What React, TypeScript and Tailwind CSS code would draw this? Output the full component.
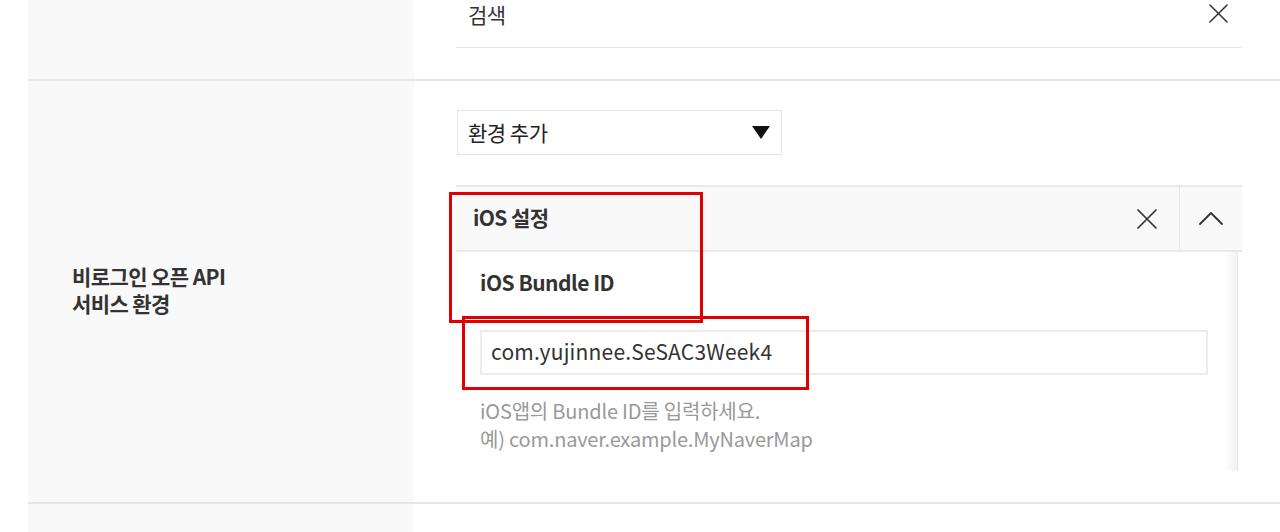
import React from "react";

const font = { fontFamily: '"Noto Sans CJK KR", "Noto Sans", sans-serif' };

function XIcon({ size = 20, stroke = 1.6 }: { size?: number; stroke?: number }) {
  return (
    <svg width={size} height={size} viewBox="0 0 20 20" fill="none" stroke="#333" strokeWidth={stroke} strokeLinecap="round">
      <path d="M1 1 L19 19 M19 1 L1 19" />
    </svg>
  );
}

export default function App() {
  return (
    <div className="relative w-[1280px] h-[532px] overflow-hidden bg-white text-[#333]" style={font}>
      <div className="ml-[28px] flex flex-col">
        {/* Row 1 */}
        <div className="flex h-[79px]">
          <div className="w-[386px] bg-[#f9f9f9]" />
          <div className="flex-1 pl-[42px] pr-[38px]">
            <div className="flex h-[48px] items-start justify-between border-b border-[#e6e6e6] pl-[12px] pr-[14px]">
              <span className="text-[21px] leading-[28px] tracking-[-0.5px]">검색</span>
              <div className="mt-[4px]"><XIcon size={19} /></div>
            </div>
          </div>
        </div>
        <div className="h-[2px] bg-[#e6e6e6]" />
        {/* Row 2 */}
        <div className="flex h-[421px]">
          <div className="w-[386px] bg-[#f9f9f9] flex items-center pl-[44px]">
            <div className="text-[21px] font-bold leading-[27px] tracking-[-0.6px] text-[#333] -mt-[3px]">
              비로그인 오픈 API
              <br />
              서비스 환경
            </div>
          </div>
          <div className="flex-1 pl-[42px] pr-[38px] pt-[29px]">
            <div className="ml-[1px] flex h-[45px] w-[325px] items-center justify-between border border-[#e3e3e3] pl-[10px] pr-[11px]">
              <span className="text-[21px] tracking-[-0.5px] text-[#222]">환경 추가</span>
              <svg width="18" height="13" viewBox="0 0 18 13"><path d="M0 0 H18 L9 13 Z" fill="#111" /></svg>
            </div>
            <div className="mt-[30px]">
              <div className="flex h-[67px] border-t-2 border-b-2 border-[#e8e8e8] bg-[#f9f9f9]">
                <div className="flex flex-1 items-center pl-[17px]">
                  <span className="text-[21px] font-bold tracking-[-0.6px] text-[#333] -mt-[2px]">iOS 설정</span>
                </div>
                <div className="flex w-[64px] items-center justify-center pr-[1px]">
                  <XIcon size={20} stroke={1.7} />
                </div>
                <div className="flex w-[63px] items-center justify-center border-l border-[#e6e6e6]">
                  <svg width="24" height="13" viewBox="0 0 24 13" fill="none" stroke="#333" strokeWidth="1.8" strokeLinecap="round" strokeLinejoin="round">
                    <path d="M1 12 L12 1 L23 12" />
                  </svg>
                </div>
              </div>
              <div className="flex h-[219px] w-[782px]">
                <div className="flex-1 pl-[24px] pr-[17px]">
                  <div className="pt-[16px] text-[21px] font-semibold leading-[28px] tracking-[-0.5px] text-[#333]">iOS Bundle ID</div>
                  <div className="mt-[34px] flex h-[45px] items-center border-2 border-[#ececec] pl-[9px]">
                    <span className="text-[21px] tracking-[0.2px] text-[#333] -mt-[2px]">com.yujinnee.SeSAC3Week4</span>
                  </div>
                  <div className="mt-[22px] text-[20px] leading-[28px] tracking-[-0.2px] text-[#999]">
                    iOS앱의 Bundle ID를 입력하세요.
                    <br />
                    예) com.naver.example.MyNaverMap
                  </div>
                </div>
                <div className="w-[13px] bg-gradient-to-r from-white to-[#f1f1f1] border-r border-[#e8e8e8]" />
              </div>
            </div>
          </div>
        </div>
        <div className="h-[2px] bg-[#e6e6e6]" />
        <div className="flex h-[40px]">
          <div className="w-[386px] bg-[#f9f9f9]" />
        </div>
      </div>
      {/* annotation boxes */}
      <div className="absolute left-[449px] top-[192px] h-[131px] w-[254px] border-[3px] border-[#e00000]" />
      <div className="absolute left-[462px] top-[316px] h-[74px] w-[347px] border-[3px] border-[#e00000]" />
    </div>
  );
}
